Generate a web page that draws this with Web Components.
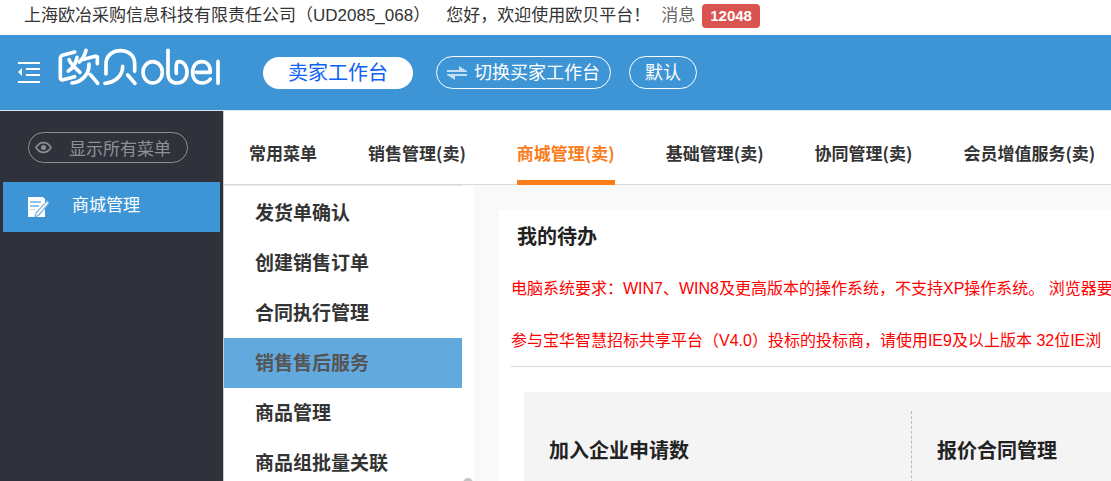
<!DOCTYPE html>
<html lang="zh-CN">
<head>
<meta charset="utf-8">
<title>欧贝平台</title>
<style>
:root{--blue:#3d95d6;--dark:#2f323b;--orange:#fb7c1a;--ink:#333;--line:#d9d9d9}
html,body{margin:0;height:100%}
body{font-family:"Liberation Sans","Noto Sans CJK SC",sans-serif;font-size:17px;color:var(--ink);background:#fff;overflow:hidden}
</style>
</head>
<body>
<ob-app></ob-app>
<script>
function define(name, html) {
  const t = document.createElement('template');
  t.innerHTML = html;
  customElements.define(name, class extends HTMLElement {
    constructor() {
      super();
      this.attachShadow({mode: 'open'}).append(t.content.cloneNode(true));
    }
  });
}

define('ob-topbar', `
<style>
:host{display:flex;align-items:center;height:35px;padding:0 24px 4px;line-height:24px;white-space:nowrap;box-sizing:border-box}
.name{margin-right:16px}
a{display:flex;align-items:center;gap:7px;margin-left:11px;color:#666;text-decoration:none}
b{font-size:15px;color:#fff;background:#d9534f;border-radius:4px;padding:0 8px}
</style>
<span class="name">上海欧冶采购信息科技有限责任公司（UD2085_068）</span>
<span>您好，欢迎使用欧贝平台！</span>
<a href="#messages">消息<b>12048</b></a>`);

define('ob-logo', `
<style>:host{display:block;width:180px;height:60px}svg{display:block}</style>
<svg width="180" height="60" viewBox="0 0 540 180" fill="none" stroke="#fff" stroke-width="11" stroke-linecap="round" stroke-linejoin="round" role="img" aria-label="欧贝 obei">
<path d="M74 36L40 45Q31 48 31 54V115Q31 121 40 119L74 110M57 59C63 74 77 85 90 97M81 52C78 68 68 85 55 93"/>
<path d="M108 31C105 45 99 56 88 66M101 58L136 49Q144 47 142 56V71M117 72C118 98 101 125 66 129M120 103C127 109 135 120 143 130"/>
<path d="M168 102V70C168 48 187 32 211 32C236 32 254 47 254 70V94M218 79C218 105 199 126 165 130M233 105C241 112 247 123 255 130"/>
<ellipse cx="308" cy="97" rx="29" ry="32"/>
<path d="M354 31V101C354 119 365 129 382 129C399 129 411 116 411 97C411 79 402 65 387 65C378 65 378 76 379 100"/>
<path d="M439 97H481C481 77 471 65 456 65C438 65 428 79 428 97C428 118 440 129 456 129C469 129 475 125 481 117M504 64V130"/>
</svg>`);

define('ob-header', `
<style>
:host{display:flex;align-items:center;height:75px;background:var(--blue);border-bottom:1px solid #dce6ea;padding-left:18px}
button{font:inherit;white-space:nowrap;cursor:pointer;box-sizing:border-box;padding:0 0 3px;display:flex;align-items:center;justify-content:center}
svg{display:block;flex:none}
.fold{background:none;border:0;padding:0}
ob-logo{margin:0 33px 6px 10px;flex:none}
.cur{width:150px;height:32px;border:0;border-radius:16px;background:#fff;color:#0b62f5;font-size:20px}
.out{height:33px;border:1px solid #fff;border-radius:17px;background:none;color:#fff;font-size:18px}
.switch{width:175px;gap:6px;margin:0 18px 0 23px}
.switch svg{margin-top:3px}
.mode{width:68px}
</style>
<button class="fold" aria-label="收起菜单"><svg width="22" height="23" viewBox="0 0 22 23" fill="#fff"><path d="M0 1h22v2H0zM8 7h14v2H8zM8 13h14v2H8zM0 20h22v2H0zM4 7v8L0 11z"/></svg></button>
<ob-logo></ob-logo>
<button class="cur">卖家工作台</button>
<button class="out switch"><svg width="21" height="16" viewBox="0 0 21 16" fill="#fff" opacity=".7"><path d="M0 5h12V1l8 5v1H0zM20 9H0v1l8 5v-4h12z"/></svg>切换买家工作台</button>
<button class="out mode">默认</button>`);

define('ob-sidebar', `
<style>
:host{display:block;background:var(--dark);border-right:1px solid #c9cacc;padding:21px 3px 0;box-sizing:border-box}
button{display:flex;align-items:center;gap:17px;width:160px;height:31px;margin:0 0 19px 25px;padding:0 0 0 6px;box-sizing:border-box;border:1px solid #8d8f94;border-radius:16px;background:none;color:#8f9196;font:inherit;white-space:nowrap}
a{display:flex;align-items:center;gap:23px;height:50px;padding-left:25px;background:var(--blue);color:#fff;text-decoration:none;line-height:24px}
span{padding-bottom:3px}
svg{display:block;flex:none}
</style>
<button><svg width="17" height="13" viewBox="0 0 17 13"><path d="M1 6.500C5 0 12 0 16 6.500C12 13 5 13 1 6.500Z" fill="none" stroke="#8d8f94" stroke-width="1.600"/><circle cx="8.500" cy="6.500" r="2.500" fill="#8d8f94"/></svg>显示所有菜单</button>
<a href="#mall"><svg width="21" height="20" viewBox="0 0 21 20"><path d="M0 0h15l2 2v18H0z" fill="#fff"/><path d="M2 5h11M2 9h9" stroke="#6aaee0" stroke-width="1.300"/><path d="M2 12.500h5" stroke="#bcd9f0"/><path d="M19 4l2 2-10 12-4 2 1-4z" fill="#fff" stroke="#7db5e0" stroke-width="1.200"/></svg><span>商城管理</span></a>`);

define('ob-tabs', `
<style>
:host{display:block;border-bottom:1px solid var(--line);background:#fff}
nav{display:flex;gap:51px;padding-left:25px;height:73px}
a{font:bold 17px/83px "Noto Sans CJK SC",sans-serif;color:var(--ink);text-decoration:none;white-space:nowrap;flex:none;height:74px;box-sizing:border-box}
a[aria-current]{color:var(--orange);border-bottom:5px solid var(--orange)}
</style>
<nav><a href="#common">常用菜单</a><a href="#sales">销售管理(卖)</a><a href="#mall" aria-current="page">商城管理(卖)</a><a href="#base">基础管理(卖)</a><a href="#coop">协同管理(卖)</a><a href="#member">会员增值服务(卖)</a></nav>`);

define('ob-submenu', `
<style>
:host{display:grid;grid-template-columns:1fr 12px;background:#fff}
nav{border-top:1px solid #e6e6e6;padding-top:2px}
a{display:block;height:50px;padding-left:31px;font:bold 19px/48px "Noto Sans CJK SC",sans-serif;color:var(--ink);text-decoration:none;white-space:nowrap}
a[aria-current]{background:#62a9de;color:#555}
.rail{padding:293px 1px 0}
.thumb{height:80px;border-radius:5px;background:#c4c4c4}
</style>
<nav><a href="#1">发货单确认</a><a href="#2">创建销售订单</a><a href="#3">合同执行管理</a><a href="#4" aria-current="true">销售售后服务</a><a href="#5">商品管理</a><a href="#6">商品组批量关联</a></nav>
<div class="rail"><div class="thumb"></div></div>`);

define('ob-card', `
<style>
:host{display:block;padding:38px 25px 0}
h3{margin:0;font:bold 20px/40px "Noto Sans CJK SC",sans-serif;color:#222;white-space:nowrap}
</style>
<h3><slot></slot></h3>`);

define('ob-todo', `
<style>
:host{display:block;background:#fff;padding-left:12px;overflow:hidden}
h2{margin:0;padding-left:6px;font:bold 20px/52px "Noto Sans CJK SC",sans-serif;color:#222}
p{margin:0;padding-top:2px;font-size:16px;line-height:50px;color:#f00;white-space:nowrap}
p+p{border-bottom:1px solid var(--line)}
.cards{display:grid;grid-template-columns:387px minmax(387px,1fr);margin:25px 0 0 13px;background:#f4f4f4;min-height:200px}
.group{display:flex}
.sep{margin-top:19px;border-left:1px dashed #bbb}
</style>
<h2>我的待办</h2>
<p>电脑系统要求：WIN7、WIN8及更高版本的操作系统，不支持XP操作系统。 浏览器要</p>
<p>参与宝华智慧招标共享平台（V4.0）投标的投标商，请使用IE9及以上版本 32位IE浏</p>
<section class="cards"><ob-card>加入企业申请数</ob-card><div class="group"><div class="sep"></div><ob-card>报价合同管理</ob-card></div></section>`);

define('ob-app', `
<style>
:host{display:flex;flex-direction:column;height:100vh;overflow:hidden}
ob-topbar,ob-header{flex:none}
.main{flex:1;min-height:0;display:grid;grid-template-columns:224px minmax(0,1fr)}
.right{display:flex;flex-direction:column;min-width:0;min-height:0}
ob-tabs{flex:none}
.work{flex:1;min-height:0;display:grid;grid-template-columns:250px minmax(0,1fr);background:#f9f9f9;overflow:hidden}
ob-todo{margin:25px 0 0 25px}
</style>
<ob-topbar></ob-topbar>
<ob-header></ob-header>
<div class="main"><ob-sidebar></ob-sidebar><div class="right"><ob-tabs></ob-tabs><div class="work"><ob-submenu></ob-submenu><ob-todo></ob-todo></div></div></div>`);
</script>
</body>
</html>
